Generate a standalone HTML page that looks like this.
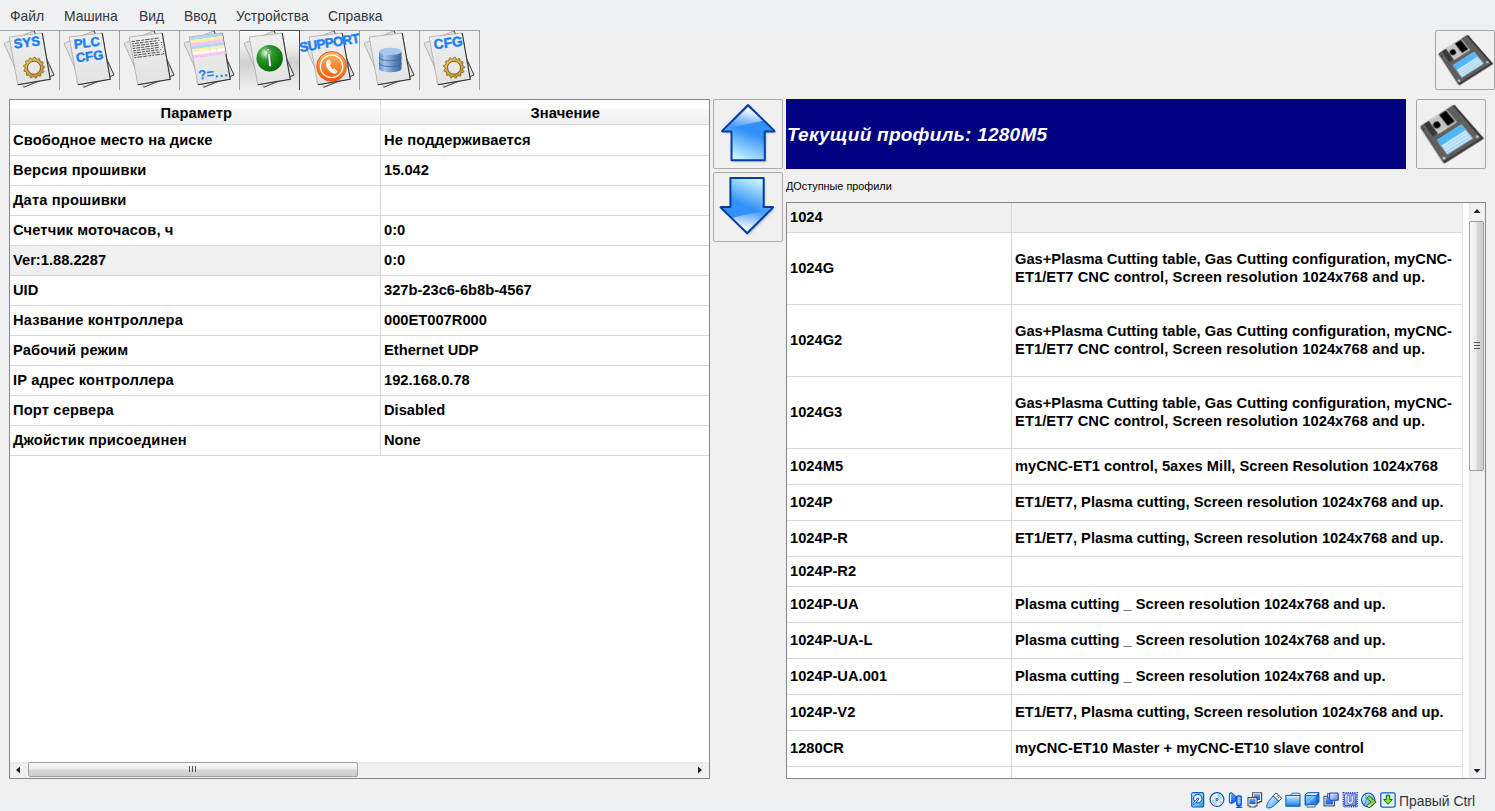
<!DOCTYPE html><html><head><meta charset="utf-8"><style>
*{margin:0;padding:0;box-sizing:border-box}
html,body{width:1495px;height:811px;overflow:hidden;background:#eff0f1;font-family:"Liberation Sans",sans-serif;position:relative}
.abs{position:absolute}
.menu span{position:absolute;top:7.5px;font-size:13.9px;color:#31363b;line-height:16px;white-space:nowrap}
.t{position:absolute;font-weight:bold;font-size:14.7px;color:#000;white-space:nowrap;line-height:17px}
.hl{position:absolute;height:1px;background:#d8d8d8}
.vl{position:absolute;width:1px;background:#d8d8d8}
</style></head><body>
<div class="abs" style="left:0;top:0;width:1495px;height:790px;background:#f0f0f0"></div>
<div class="abs" style="left:0;top:0;width:1495px;height:30px;background:#eff0f1"></div>
<div class="abs" style="left:0;top:790px;width:1495px;height:21px;background:#eff0f1"></div>
<div class="menu">
<span style="left:10px">Файл</span>
<span style="left:64px">Машина</span>
<span style="left:139px">Вид</span>
<span style="left:184px">Ввод</span>
<span style="left:236px">Устройства</span>
<span style="left:328px">Справка</span>
</div>
<div class="abs" style="left:0;top:30px;width:480px;height:1px;background:#a0a0a0"></div>
<div class="abs" style="left:59px;top:31px;width:1px;height:59px;background:#a0a0a0"></div>
<div class="abs" style="left:119px;top:31px;width:1px;height:59px;background:#a0a0a0"></div>
<div class="abs" style="left:179px;top:31px;width:1px;height:59px;background:#a0a0a0"></div>
<div class="abs" style="left:239px;top:31px;width:1px;height:59px;background:#a0a0a0"></div>
<div class="abs" style="left:299px;top:31px;width:1px;height:59px;background:#a0a0a0"></div>
<div class="abs" style="left:359px;top:31px;width:1px;height:59px;background:#a0a0a0"></div>
<div class="abs" style="left:419px;top:31px;width:1px;height:59px;background:#a0a0a0"></div>
<div class="abs" style="left:479px;top:31px;width:1px;height:59px;background:#a0a0a0"></div>
<svg class="abs" style="left:0px;top:30px;overflow:visible" width="60" height="60" viewBox="0 0 60 60"><defs><linearGradient id="pgg" x1="0" y1="0" x2="0" y2="1"><stop offset="0" stop-color="#efefef"/><stop offset="1" stop-color="#e2e2e2"/></linearGradient><radialGradient id="gld" cx="0.4" cy="0.35" r="0.7"><stop offset="0" stop-color="#f5d070"/><stop offset="1" stop-color="#c08a20"/></radialGradient><radialGradient id="grn" cx="0.35" cy="0.3" r="0.75"><stop offset="0" stop-color="#e8ffe8"/><stop offset="0.35" stop-color="#2a9a2a"/><stop offset="1" stop-color="#006800"/></radialGradient><linearGradient id="org" x1="0" y1="0" x2="0" y2="1"><stop offset="0" stop-color="#f4b870"/><stop offset="0.5" stop-color="#f28a30"/><stop offset="1" stop-color="#f85400"/></linearGradient><linearGradient id="dbg" x1="0" y1="0" x2="1" y2="0"><stop offset="0" stop-color="#5a88c0"/><stop offset="0.25" stop-color="#a8c8ec"/><stop offset="0.7" stop-color="#5a86c0"/><stop offset="1" stop-color="#3a64a0"/></linearGradient></defs><polygon points="4,13.3 34,0.8 54,45 23.7,57.3" fill="#e3e3e3" stroke="#9a9a9a" stroke-width="0.7"/><path d="M34,0.8 L54,45 L23.7,57.3" fill="none" stroke="#4a4a4a" stroke-width="1"/><polygon points="9.2,7 42.2,3 50.3,49.2 17.8,54.7" fill="url(#pgg)" stroke="#a0a0a0" stroke-width="0.7"/><path d="M42.2,3 L50.3,49.2 L17.8,54.7" fill="none" stroke="#333" stroke-width="1.1"/><text x="14.2" y="18.5" font-family="Liberation Sans" font-weight="bold" font-size="13.2" fill="#1b7ff0" stroke="#1b7ff0" stroke-width="0.45" transform="rotate(-7 14.2 18.5)" >SYS</text><polygon points="34.00,27.20 35.27,27.28 36.13,29.06 37.16,29.38 38.88,28.40 39.96,29.06 39.90,31.04 40.66,31.80 42.64,31.74 43.30,32.82 42.32,34.54 42.64,35.57 44.42,36.43 44.50,37.70 42.84,38.77 42.64,39.83 43.82,41.42 43.30,42.58 41.32,42.76 40.66,43.60 40.96,45.56 39.96,46.34 38.14,45.58 37.16,46.02 36.51,47.89 35.27,48.12 34.00,46.60 32.93,46.54 31.49,47.89 30.28,47.52 29.86,45.58 28.94,45.02 27.04,45.56 26.14,44.66 26.68,42.76 26.12,41.84 24.18,41.42 23.81,40.21 25.16,38.77 25.10,37.70 23.58,36.43 23.81,35.19 25.68,34.54 26.12,33.56 25.36,31.74 26.14,30.74 28.10,31.04 28.94,30.38 29.12,28.40 30.28,27.88 31.87,29.06 32.93,28.86" fill="url(#gld)" stroke="#7a5410" stroke-width="0.7" stroke-linejoin="round"/><circle cx="34" cy="37.7" r="6.5" fill="#e8e8e8" stroke="#6a4a10" stroke-width="0.9"/></svg>
<svg class="abs" style="left:60px;top:30px;overflow:visible" width="60" height="60" viewBox="0 0 60 60"><polygon points="4,13.3 34,0.8 54,45 23.7,57.3" fill="#e3e3e3" stroke="#9a9a9a" stroke-width="0.7"/><path d="M34,0.8 L54,45 L23.7,57.3" fill="none" stroke="#4a4a4a" stroke-width="1"/><polygon points="9.2,7 42.2,3 50.3,49.2 17.8,54.7" fill="url(#pgg)" stroke="#a0a0a0" stroke-width="0.7"/><path d="M42.2,3 L50.3,49.2 L17.8,54.7" fill="none" stroke="#333" stroke-width="1.1"/><text x="14.5" y="18.8" font-family="Liberation Sans" font-weight="bold" font-size="13" fill="#1b7ff0" stroke="#1b7ff0" stroke-width="0.45" transform="rotate(-7 14.5 18.8)" >PLC</text><text x="16.5" y="32.3" font-family="Liberation Sans" font-weight="bold" font-size="13" fill="#1b7ff0" stroke="#1b7ff0" stroke-width="0.45" transform="rotate(-7 16.5 32.3)" >CFG</text></svg>
<svg class="abs" style="left:120px;top:30px;overflow:visible" width="60" height="60" viewBox="0 0 60 60"><polygon points="4,13.3 34,0.8 54,45 23.7,57.3" fill="#e3e3e3" stroke="#9a9a9a" stroke-width="0.7"/><path d="M34,0.8 L54,45 L23.7,57.3" fill="none" stroke="#4a4a4a" stroke-width="1"/><polygon points="9.2,7 42.2,3 50.3,49.2 17.8,54.7" fill="url(#pgg)" stroke="#a0a0a0" stroke-width="0.7"/><path d="M42.2,3 L50.3,49.2 L17.8,54.7" fill="none" stroke="#333" stroke-width="1.1"/><line x1="11.6" y1="11.6" x2="41.5" y2="7.7" stroke="#303030" stroke-width="0.85" stroke-dasharray="3.5 1 4 1.2 3 1 4.5 1 3 1 4"/><line x1="12.0" y1="13.9" x2="41.9" y2="10.0" stroke="#303030" stroke-width="0.85" stroke-dasharray="2 1 4 1 3.5 1.2 4 1 3 1 3"/><line x1="12.4" y1="16.2" x2="42.3" y2="12.3" stroke="#303030" stroke-width="0.85" stroke-dasharray="3 1.2 3.5 1 4 1 3 1 4 1 3"/><line x1="12.8" y1="18.5" x2="42.7" y2="14.6" stroke="#303030" stroke-width="0.85" stroke-dasharray="2.5 1 4 1 3 1 4.5 1 3 1 4"/><line x1="13.2" y1="20.8" x2="43.1" y2="16.9" stroke="#303030" stroke-width="0.85" stroke-dasharray="3 1 3 1.2 4 1 3.5 1 3 1 4"/><line x1="13.6" y1="23.1" x2="43.5" y2="19.2" stroke="#303030" stroke-width="0.85" stroke-dasharray="2 1 4.5 1 3 1 4 1 3.5 1 3"/><line x1="14.0" y1="25.4" x2="43.9" y2="21.5" stroke="#303030" stroke-width="0.85" stroke-dasharray="3.5 1 3 1 4 1.2 3 1 4 1 3"/><line x1="14.4" y1="27.7" x2="44.3" y2="23.8" stroke="#303030" stroke-width="0.85" stroke-dasharray="2 1 5 1 4 1 3 1"/></svg>
<svg class="abs" style="left:180px;top:30px;overflow:visible" width="60" height="60" viewBox="0 0 60 60"><polygon points="4,13.3 34,0.8 54,45 23.7,57.3" fill="#e3e3e3" stroke="#9a9a9a" stroke-width="0.7"/><path d="M34,0.8 L54,45 L23.7,57.3" fill="none" stroke="#4a4a4a" stroke-width="1"/><polygon points="9.2,7 42.2,3 50.3,49.2 17.8,54.7" fill="url(#pgg)" stroke="#a0a0a0" stroke-width="0.7"/><path d="M42.2,3 L50.3,49.2 L17.8,54.7" fill="none" stroke="#333" stroke-width="1.1"/><polygon points="10.00,7.20 42.40,3.10 42.90,6.10 10.50,10.20" fill="#a9d8f8"/><polygon points="10.52,10.20 42.92,6.10 43.42,9.10 11.02,13.20" fill="#fbf2a8"/><polygon points="11.04,13.20 43.44,9.10 43.94,12.10 11.54,16.20" fill="#fbc4f0"/><polygon points="11.56,16.20 43.96,12.10 44.46,15.10 12.06,19.20" fill="#a9d8f8"/><polygon points="12.08,19.20 44.48,15.10 44.98,18.10 12.58,22.20" fill="#fbf2a8"/><polygon points="12.60,22.20 45.00,18.10 45.50,21.10 13.10,25.20" fill="#ffffff"/><polygon points="13.12,25.20 45.52,21.10 46.02,24.10 13.62,28.20" fill="#fbc4f0"/><line x1="27.5" y1="6" x2="30.5" y2="26" stroke="#d0d0d0" stroke-width="0.5"/><line x1="34.5" y1="5" x2="37.5" y2="25" stroke="#d0d0d0" stroke-width="0.5"/><text x="19" y="49.5" font-family="Liberation Sans" font-weight="bold" font-size="13" fill="#1b7ff0" stroke="#1b7ff0" stroke-width="0.1" transform="rotate(-7 19 49.5)" >?=</text><text x="35" y="47.6" font-family="Liberation Sans" font-weight="bold" font-size="13" fill="#1b7ff0" stroke="#1b7ff0" stroke-width="0.1" transform="rotate(-7 35 47.6)" letter-spacing="1.1">...</text></svg>
<div class="abs" style="left:240px;top:30px;width:60px;height:60px;background:linear-gradient(#f8f8f8 0,#f0f0f0 25%,#d0d0d0 52%,#e2e2e2 78%,#f0f0f0 100%);border-top:1px solid #555;border-right:1px solid #444"></div>
<svg class="abs" style="left:240px;top:30px;overflow:visible" width="60" height="60" viewBox="0 0 60 60"><polygon points="4,13.3 34,0.8 54,45 23.7,57.3" fill="#e3e3e3" stroke="#9a9a9a" stroke-width="0.7"/><path d="M34,0.8 L54,45 L23.7,57.3" fill="none" stroke="#4a4a4a" stroke-width="1"/><polygon points="9.2,7 42.2,3 50.3,49.2 17.8,54.7" fill="url(#pgg)" stroke="#a0a0a0" stroke-width="0.7"/><path d="M42.2,3 L50.3,49.2 L17.8,54.7" fill="none" stroke="#333" stroke-width="1.1"/><circle cx="29.7" cy="28.2" r="13.2" fill="url(#grn)"/><rect x="28.2" y="23.4" width="2.6" height="13.2" fill="#fff" stroke="#0b4a12" stroke-width="0.5" transform="rotate(-6 29.5 30)"/><rect x="26.9" y="18.4" width="2.8" height="2.6" fill="#fff" stroke="#0b4a12" stroke-width="0.5" transform="rotate(-10 28.3 19.7)"/></svg>
<svg class="abs" style="left:300px;top:30px;overflow:visible" width="60" height="60" viewBox="0 0 60 60"><polygon points="4,13.3 34,0.8 54,45 23.7,57.3" fill="#e3e3e3" stroke="#9a9a9a" stroke-width="0.7"/><path d="M34,0.8 L54,45 L23.7,57.3" fill="none" stroke="#4a4a4a" stroke-width="1"/><polygon points="9.2,7 42.2,3 50.3,49.2 17.8,54.7" fill="url(#pgg)" stroke="#a0a0a0" stroke-width="0.7"/><path d="M42.2,3 L50.3,49.2 L17.8,54.7" fill="none" stroke="#333" stroke-width="1.1"/><circle cx="31.6" cy="36.4" r="14.9" fill="url(#org)" stroke="#f04c08" stroke-width="0.9"/><circle cx="31.6" cy="36.4" r="11.2" fill="none" stroke="#fff" stroke-width="1.2"/><path d="M27.2,30.6 L29.6,29.9 L31.2,33.6 L29.6,34.8 Q30.2,37.6 32.8,39.6 L34.3,38.5 L37.3,41.2 L36.4,43.1 Q33.8,44.5 30.2,41.6 Q25.6,37.6 26.2,32.6 Z" fill="#fff" stroke="#f5f5f5" stroke-width="0.4"/><path d="M28.8,31.2 L30,33.6 M33.6,40.2 L36,41.8" stroke="#f08030" stroke-width="0.5"/><text x="0.3" y="22" font-family="Liberation Sans" font-weight="bold" font-size="13.3" fill="#1b7ff0" stroke="#1b7ff0" stroke-width="0.45" transform="rotate(-9 0.3 22)" letter-spacing="-0.6">SUPPORT</text></svg>
<svg class="abs" style="left:360px;top:30px;overflow:visible" width="60" height="60" viewBox="0 0 60 60"><polygon points="4,13.3 34,0.8 54,45 23.7,57.3" fill="#e3e3e3" stroke="#9a9a9a" stroke-width="0.7"/><path d="M34,0.8 L54,45 L23.7,57.3" fill="none" stroke="#4a4a4a" stroke-width="1"/><polygon points="9.2,7 42.2,3 50.3,49.2 17.8,54.7" fill="url(#pgg)" stroke="#a0a0a0" stroke-width="0.7"/><path d="M42.2,3 L50.3,49.2 L17.8,54.7" fill="none" stroke="#333" stroke-width="1.1"/><path d="M19,21.5 L41.5,21.5 L41.5,39 A11.25,3.2 0 0 1 19,39 Z" fill="url(#dbg)"/><ellipse cx="30.25" cy="21.4" rx="11.25" ry="3.6" fill="#a6c6ec"/><path d="M19,27.4 A11.25,3.3 0 0 0 41.5,27.4" fill="none" stroke="#3a5a8a" stroke-width="0.7"/><path d="M19,33.2 A11.25,3.3 0 0 0 41.5,33.2" fill="none" stroke="#3a5a8a" stroke-width="0.7"/></svg>
<svg class="abs" style="left:420px;top:30px;overflow:visible" width="60" height="60" viewBox="0 0 60 60"><polygon points="4,13.3 34,0.8 54,45 23.7,57.3" fill="#e3e3e3" stroke="#9a9a9a" stroke-width="0.7"/><path d="M34,0.8 L54,45 L23.7,57.3" fill="none" stroke="#4a4a4a" stroke-width="1"/><polygon points="9.2,7 42.2,3 50.3,49.2 17.8,54.7" fill="url(#pgg)" stroke="#a0a0a0" stroke-width="0.7"/><path d="M42.2,3 L50.3,49.2 L17.8,54.7" fill="none" stroke="#333" stroke-width="1.1"/><text x="14.3" y="19.2" font-family="Liberation Sans" font-weight="bold" font-size="13.8" fill="#1b7ff0" stroke="#1b7ff0" stroke-width="0.45" transform="rotate(-7 14.3 19.2)" >CFG</text><polygon points="34.00,27.20 35.27,27.28 36.13,29.06 37.16,29.38 38.88,28.40 39.96,29.06 39.90,31.04 40.66,31.80 42.64,31.74 43.30,32.82 42.32,34.54 42.64,35.57 44.42,36.43 44.50,37.70 42.84,38.77 42.64,39.83 43.82,41.42 43.30,42.58 41.32,42.76 40.66,43.60 40.96,45.56 39.96,46.34 38.14,45.58 37.16,46.02 36.51,47.89 35.27,48.12 34.00,46.60 32.93,46.54 31.49,47.89 30.28,47.52 29.86,45.58 28.94,45.02 27.04,45.56 26.14,44.66 26.68,42.76 26.12,41.84 24.18,41.42 23.81,40.21 25.16,38.77 25.10,37.70 23.58,36.43 23.81,35.19 25.68,34.54 26.12,33.56 25.36,31.74 26.14,30.74 28.10,31.04 28.94,30.38 29.12,28.40 30.28,27.88 31.87,29.06 32.93,28.86" fill="url(#gld)" stroke="#7a5410" stroke-width="0.7" stroke-linejoin="round"/><circle cx="34" cy="37.7" r="6.5" fill="#e8e8e8" stroke="#6a4a10" stroke-width="0.9"/></svg>
<div class="abs" style="left:9px;top:99px;width:701px;height:680px;background:#fff;border:1px solid #828790"></div>
<div class="abs" style="left:10px;top:100px;width:699px;height:25px;background:linear-gradient(#fff 0,#fff 8px,#f6f7f8 9px,#eff0f2 24px);border-bottom:1px solid #d5d5d5"></div>
<div class="vl" style="left:380px;top:100px;height:24px;background:#e2e3e6"></div>
<div class="t" style="left:160.5px;top:104.95px;letter-spacing:0.1px">Параметр</div>
<div class="t" style="left:530.5px;top:104.95px;letter-spacing:0.1px">Значение</div>
<div class="hl" style="left:10px;top:155px;width:699px"></div>
<div class="t" style="left:13px;top:131.65px;letter-spacing:0.15px">Свободное место на диске</div>
<div class="t" style="left:384px;top:131.65px;letter-spacing:0.15px">Не поддерживается</div>
<div class="hl" style="left:10px;top:185px;width:699px"></div>
<div class="t" style="left:13px;top:161.65px;letter-spacing:0.15px">Версия прошивки</div>
<div class="t" style="left:384px;top:161.65px;">15.042</div>
<div class="hl" style="left:10px;top:215px;width:699px"></div>
<div class="t" style="left:13px;top:191.65px;letter-spacing:0.15px">Дата прошивки</div>
<div class="hl" style="left:10px;top:245px;width:699px"></div>
<div class="t" style="left:13px;top:221.65px;letter-spacing:0.15px">Счетчик моточасов, ч</div>
<div class="t" style="left:384px;top:221.65px;">0:0</div>
<div class="abs" style="left:10px;top:246px;width:370px;height:29px;background:#f0f0f0"></div>
<div class="hl" style="left:10px;top:275px;width:699px"></div>
<div class="t" style="left:13px;top:251.65px;">Ver:1.88.2287</div>
<div class="t" style="left:384px;top:251.65px;">0:0</div>
<div class="hl" style="left:10px;top:305px;width:699px"></div>
<div class="t" style="left:13px;top:281.65px;">UID</div>
<div class="t" style="left:384px;top:281.65px;">327b-23c6-6b8b-4567</div>
<div class="hl" style="left:10px;top:335px;width:699px"></div>
<div class="t" style="left:13px;top:311.65px;letter-spacing:0.15px">Название контроллера</div>
<div class="t" style="left:384px;top:311.65px;">000ET007R000</div>
<div class="hl" style="left:10px;top:365px;width:699px"></div>
<div class="t" style="left:13px;top:341.65px;letter-spacing:0.15px">Рабочий режим</div>
<div class="t" style="left:384px;top:341.65px;">Ethernet UDP</div>
<div class="hl" style="left:10px;top:395px;width:699px"></div>
<div class="t" style="left:13px;top:371.65px;letter-spacing:0.15px">IP адрес контроллера</div>
<div class="t" style="left:384px;top:371.65px;">192.168.0.78</div>
<div class="hl" style="left:10px;top:425px;width:699px"></div>
<div class="t" style="left:13px;top:401.65px;letter-spacing:0.15px">Порт сервера</div>
<div class="t" style="left:384px;top:401.65px;">Disabled</div>
<div class="hl" style="left:10px;top:455px;width:699px"></div>
<div class="t" style="left:13px;top:431.65px;letter-spacing:0.15px">Джойстик присоединен</div>
<div class="t" style="left:384px;top:431.65px;">None</div>
<div class="vl" style="left:380px;top:125px;height:331px"></div>
<div class="abs" style="left:10px;top:762px;width:699px;height:16px;background:linear-gradient(#e8e8e8,#f0f0f0 3px,#f0f0f0)"></div>
<div class="abs" style="left:28px;top:762px;width:330px;height:15px;border:1px solid #a0a0a0;border-radius:2px;background:linear-gradient(#f8f8f8,#ececec 6px,#d6d6d6 7px,#cccccc 14px)"></div>
<svg class="abs" style="left:14px;top:765px" width="10" height="10"><path d="M2 5 L6 1.5 L6 8.5 Z" fill="#222"/></svg>
<svg class="abs" style="left:694px;top:765px" width="10" height="10"><path d="M8 5 L4 1.5 L4 8.5 Z" fill="#222"/></svg>
<div class="abs" style="left:189px;top:766px;width:7px;height:6px;background:repeating-linear-gradient(90deg,#555 0,#555 1px,transparent 1px,transparent 3px)"></div>
<div class="abs" style="left:713px;top:99px;width:70px;height:70px;background:#f0f0f0;border:1px solid #acacac;border-radius:2px"></div>
<div class="abs" style="left:713px;top:172px;width:70px;height:70px;background:#f0f0f0;border:1px solid #acacac;border-radius:2px"></div>
<svg class="abs" style="left:713px;top:99px" width="70" height="70" viewBox="0 0 70 70"><defs><linearGradient id="arb" x1="0.55" y1="0.5" x2="0.35" y2="1"><stop offset="0" stop-color="#3290f8"/><stop offset="1" stop-color="#c8f6ff"/></linearGradient><linearGradient id="arw" x1="0.6" y1="0.1" x2="0.35" y2="0.9"><stop offset="0" stop-color="#ffffff" stop-opacity="0.95"/><stop offset="1" stop-color="#ffffff" stop-opacity="0"/></linearGradient><filter id="arsh" x="-20%" y="-20%" width="140%" height="140%"><feGaussianBlur stdDeviation="1"/></filter></defs><path d="M35,6 L61.2,31.6 Q62,32.4 61,32.4 L51.8,32.4 L51.8,61.3 L18.5,61.3 L18.5,32.4 L9.6,32.4 Q8.6,32.4 9.4,31.6 Z" fill="#000" opacity="0.18" transform="translate(1.5,1.8)" filter="url(#arsh)"/><path d="M35,6 L61.2,31.6 Q62,32.4 61,32.4 L51.8,32.4 L51.8,61.3 L18.5,61.3 L18.5,32.4 L9.6,32.4 Q8.6,32.4 9.4,31.6 Z" fill="url(#arb)"/><path d="M35,8 L50.8,21.4 L18.5,28.6 L18.5,32.4 L10.5,32.4 Z" fill="url(#arw)"/><path d="M35,6 L61.2,31.6 Q62,32.4 61,32.4 L51.8,32.4 L51.8,61.3 L18.5,61.3 L18.5,32.4 L9.6,32.4 Q8.6,32.4 9.4,31.6 Z" fill="none" stroke="#053d9e" stroke-width="2" stroke-linejoin="round"/></svg>
<svg class="abs" style="left:713px;top:172px" width="70" height="70" viewBox="0 0 70 70"><g transform="rotate(180 34.6 33.7)"><path d="M35,6 L61.2,31.6 Q62,32.4 61,32.4 L51.8,32.4 L51.8,61.3 L18.5,61.3 L18.5,32.4 L9.6,32.4 Q8.6,32.4 9.4,31.6 Z" fill="#000" opacity="0.18" transform="translate(-1.5,-1.8)" filter="url(#arsh)"/><path d="M35,6 L61.2,31.6 Q62,32.4 61,32.4 L51.8,32.4 L51.8,61.3 L18.5,61.3 L18.5,32.4 L9.6,32.4 Q8.6,32.4 9.4,31.6 Z" fill="url(#arb)"/><path d="M35,8 L50.8,21.4 L18.5,28.6 L18.5,32.4 L10.5,32.4 Z" fill="url(#arw)"/><path d="M35,6 L61.2,31.6 Q62,32.4 61,32.4 L51.8,32.4 L51.8,61.3 L18.5,61.3 L18.5,32.4 L9.6,32.4 Q8.6,32.4 9.4,31.6 Z" fill="none" stroke="#053d9e" stroke-width="2" stroke-linejoin="round"/></g></svg>
<div class="abs" style="left:1435px;top:30px;width:60px;height:60px;border:1px solid #a8a8a8;border-radius:2px;background:#f0f0f0"></div>
<div class="abs" style="left:1435px;top:30px;width:40px;height:40px;transform-origin:0 0;transform:matrix3d(0.717113,-0.462928,0,-0.000126,0.431823,0.599299,0,-0.003240,0,0,1,0,3.328402,23.668639,0,1.000000)"><svg width="40" height="40" viewBox="0 0 40 40" style="position:absolute;left:0;top:0;overflow:visible"><path d="M1.2,0 L40,0 L40,40 L0,40 L0,1.2 Z" fill="#5f5f5f" stroke="#3a3a3a" stroke-width="0.5"/><path d="M40,0.4 L40,40 L0.4,40" fill="none" stroke="#2c2c2c" stroke-width="1.6"/><rect x="5" y="0" width="6.4" height="15.2" fill="#383838"/><rect x="11" y="0" width="20.2" height="16" fill="#c4c4c4" stroke="#e8e8e8" stroke-width="0.5"/><rect x="22.6" y="0.5" width="8" height="14" fill="#000"/><circle cx="14.8" cy="7.9" r="3.4" fill="#000"/><rect x="6.7" y="20.5" width="26.8" height="15.3" fill="#f2f8fc"/><rect x="6.7" y="20.5" width="26.8" height="6.3" fill="#4cb8f8"/><path d="M6.7,28.4 H33.5 M6.7,30.1 H33.5 M6.7,31.8 H33.5 M6.7,33.5 H33.5 M6.7,35.1 H33.5" stroke="#5ab6ee" stroke-width="0.6"/><circle cx="1.8" cy="4.5" r="0.8" fill="#2a2a2a"/><circle cx="37.5" cy="36.6" r="1.1" fill="#e0e8f0"/><circle cx="2.6" cy="36.9" r="1.1" fill="#e0e8f0"/></svg></div>
<div class="abs" style="left:1416px;top:99px;width:70px;height:70px;border:1px solid #a8a8a8;border-radius:2px;background:#f0f0f0"></div>
<div class="abs" style="left:1416px;top:99px;width:40px;height:40px;transform-origin:0 0;transform:matrix3d(0.836632,-0.540083,0,-0.000126,0.503794,0.699182,0,-0.003240,0,0,1,0,3.883136,27.613412,0,1.000000)"><svg width="40" height="40" viewBox="0 0 40 40" style="position:absolute;left:0;top:0;overflow:visible"><path d="M1.2,0 L40,0 L40,40 L0,40 L0,1.2 Z" fill="#5f5f5f" stroke="#3a3a3a" stroke-width="0.5"/><path d="M40,0.4 L40,40 L0.4,40" fill="none" stroke="#2c2c2c" stroke-width="1.6"/><rect x="5" y="0" width="6.4" height="15.2" fill="#383838"/><rect x="11" y="0" width="20.2" height="16" fill="#c4c4c4" stroke="#e8e8e8" stroke-width="0.5"/><rect x="22.6" y="0.5" width="8" height="14" fill="#000"/><circle cx="14.8" cy="7.9" r="3.4" fill="#000"/><rect x="6.7" y="20.5" width="26.8" height="15.3" fill="#f2f8fc"/><rect x="6.7" y="20.5" width="26.8" height="6.3" fill="#4cb8f8"/><path d="M6.7,28.4 H33.5 M6.7,30.1 H33.5 M6.7,31.8 H33.5 M6.7,33.5 H33.5 M6.7,35.1 H33.5" stroke="#5ab6ee" stroke-width="0.6"/><circle cx="1.8" cy="4.5" r="0.8" fill="#2a2a2a"/><circle cx="37.5" cy="36.6" r="1.1" fill="#e0e8f0"/><circle cx="2.6" cy="36.9" r="1.1" fill="#e0e8f0"/></svg></div>
<div class="abs" style="left:786px;top:99px;width:620px;height:70px;background:#000080"></div>
<div class="abs" style="left:787px;top:123.5px;font:italic bold 19px 'Liberation Sans';color:#fff;white-space:nowrap;letter-spacing:0.24px;line-height:22px">Текущий профиль: 1280M5</div>
<div class="abs" style="left:786px;top:180px;font-size:10.85px;color:#000;white-space:nowrap;line-height:13px">ДОступные профили</div>
<div class="abs" style="left:786px;top:202px;width:700px;height:577px;background:#fff;border:1px solid #828790"></div>
<div class="abs" style="left:787px;top:203px;width:676px;height:29px;background:#f0f0f0"></div>
<div class="hl" style="left:787px;top:232px;width:676px"></div>
<div class="hl" style="left:787px;top:304px;width:676px"></div>
<div class="hl" style="left:787px;top:376px;width:676px"></div>
<div class="hl" style="left:787px;top:448px;width:676px"></div>
<div class="hl" style="left:787px;top:484px;width:676px"></div>
<div class="hl" style="left:787px;top:520px;width:676px"></div>
<div class="hl" style="left:787px;top:556px;width:676px"></div>
<div class="hl" style="left:787px;top:586px;width:676px"></div>
<div class="hl" style="left:787px;top:622px;width:676px"></div>
<div class="hl" style="left:787px;top:658px;width:676px"></div>
<div class="hl" style="left:787px;top:694px;width:676px"></div>
<div class="hl" style="left:787px;top:730px;width:676px"></div>
<div class="hl" style="left:787px;top:766px;width:676px"></div>
<div class="vl" style="left:1011px;top:203px;height:575px"></div>
<div class="vl" style="left:1462px;top:203px;height:575px;background:#e4e4e4"></div>
<div class="t" style="left:790px;top:208.65px;">1024</div>
<div class="t" style="left:790px;top:259.65px;">1024G</div>
<div class="t" style="left:1015px;top:250.65px;">Gas+Plasma Cutting table, Gas Cutting configuration, myCNC-</div>
<div class="t" style="left:1015px;top:268.65px;letter-spacing:0.08px">ET1/ET7 CNC control, Screen resolution 1024x768 and up.</div>
<div class="t" style="left:790px;top:331.65px;">1024G2</div>
<div class="t" style="left:1015px;top:322.65px;">Gas+Plasma Cutting table, Gas Cutting configuration, myCNC-</div>
<div class="t" style="left:1015px;top:340.65px;letter-spacing:0.08px">ET1/ET7 CNC control, Screen resolution 1024x768 and up.</div>
<div class="t" style="left:790px;top:403.65px;">1024G3</div>
<div class="t" style="left:1015px;top:394.65px;">Gas+Plasma Cutting table, Gas Cutting configuration, myCNC-</div>
<div class="t" style="left:1015px;top:412.65px;letter-spacing:0.08px">ET1/ET7 CNC control, Screen resolution 1024x768 and up.</div>
<div class="t" style="left:790px;top:457.65px;">1024M5</div>
<div class="t" style="left:1015px;top:457.65px;">myCNC-ET1 control, 5axes Mill, Screen Resolution 1024x768</div>
<div class="t" style="left:790px;top:493.65px;">1024P</div>
<div class="t" style="left:1015px;top:493.65px;">ET1/ET7, Plasma cutting, Screen resolution 1024x768 and up.</div>
<div class="t" style="left:790px;top:529.65px;">1024P-R</div>
<div class="t" style="left:1015px;top:529.65px;">ET1/ET7, Plasma cutting, Screen resolution 1024x768 and up.</div>
<div class="t" style="left:790px;top:562.65px;">1024P-R2</div>
<div class="t" style="left:790px;top:595.65px;">1024P-UA</div>
<div class="t" style="left:1015px;top:595.65px;">Plasma cutting _ Screen resolution 1024x768 and up.</div>
<div class="t" style="left:790px;top:631.65px;">1024P-UA-L</div>
<div class="t" style="left:1015px;top:631.65px;">Plasma cutting _ Screen resolution 1024x768 and up.</div>
<div class="t" style="left:790px;top:667.65px;">1024P-UA.001</div>
<div class="t" style="left:1015px;top:667.65px;">Plasma cutting _ Screen resolution 1024x768 and up.</div>
<div class="t" style="left:790px;top:703.65px;">1024P-V2</div>
<div class="t" style="left:1015px;top:703.65px;">ET1/ET7, Plasma cutting, Screen resolution 1024x768 and up.</div>
<div class="t" style="left:790px;top:739.65px;">1280CR</div>
<div class="t" style="left:1015px;top:739.65px;">myCNC-ET10 Master + myCNC-ET10 slave control</div>
<div class="abs" style="left:1469px;top:203px;width:16px;height:575px;background:linear-gradient(90deg,#e8e8e8,#f0f0f0 3px,#f0f0f0)"></div>
<div class="abs" style="left:1469px;top:221px;width:15px;height:250px;border:1px solid #a0a0a0;border-radius:2px;background:linear-gradient(90deg,#f8f8f8,#ececec 6px,#d6d6d6 7px,#cccccc 14px)"></div>
<svg class="abs" style="left:1472px;top:207px" width="10" height="10"><path d="M5 2 L1.5 6 L8.5 6 Z" fill="#222"/></svg>
<svg class="abs" style="left:1472px;top:765px" width="10" height="10"><path d="M5 8 L1.5 4 L8.5 4 Z" fill="#222"/></svg>
<div class="abs" style="left:1474px;top:342px;width:6px;height:7px;background:repeating-linear-gradient(180deg,#555 0,#555 1px,transparent 1px,transparent 3px)"></div>
<svg class="abs" style="left:1190px;top:792px;overflow:visible" width="16" height="16" viewBox="0 0 16 16"><defs><linearGradient id="sb1" x1="0" y1="0" x2="1" y2="1"><stop offset="0" stop-color="#e8f8ff"/><stop offset="0.45" stop-color="#9ad6fa"/><stop offset="1" stop-color="#2c88e6"/></linearGradient><linearGradient id="sb2" x1="0" y1="0" x2="0" y2="1"><stop offset="0" stop-color="#ffffff"/><stop offset="0.25" stop-color="#9adcf8"/><stop offset="1" stop-color="#1c7ae0"/></linearGradient><linearGradient id="sb3" x1="0" y1="0" x2="0" y2="1"><stop offset="0" stop-color="#66a8f8"/><stop offset="1" stop-color="#0a54e0"/></linearGradient><linearGradient id="sb4" x1="0" y1="0" x2="1" y2="1"><stop offset="0" stop-color="#ffffff"/><stop offset="0.4" stop-color="#b0c4f8"/><stop offset="1" stop-color="#6080f0"/></linearGradient><linearGradient id="sb5" x1="0" y1="0" x2="0.6" y2="1"><stop offset="0" stop-color="#9ad8ff"/><stop offset="1" stop-color="#2a80e8"/></linearGradient><linearGradient id="sg1" x1="0" y1="1" x2="1" y2="0"><stop offset="0" stop-color="#f0ffb0"/><stop offset="1" stop-color="#48b010"/></linearGradient></defs><rect x="1.7" y="0.7" width="12" height="14.3" rx="1.6" fill="url(#sb1)" stroke="#0c5cc8" stroke-width="1.2"/><circle cx="7.7" cy="6.6" r="4.2" fill="#f4fbff" stroke="#0c5cc8" stroke-width="1.1"/><circle cx="7.9" cy="6.6" r="1.2" fill="#0c5cc8"/><path d="M8,7 L3.8,11.8" stroke="#0c5cc8" stroke-width="2.4" stroke-linecap="round"/><path d="M8,7 L3.8,11.8" stroke="#fff" stroke-width="1" stroke-linecap="round"/></svg>
<svg class="abs" style="left:1209px;top:792px;overflow:visible" width="16" height="16" viewBox="0 0 16 16"><circle cx="8" cy="7.5" r="6.9" fill="#f6fbff" stroke="#0c50b8" stroke-width="1.2"/><path d="M8,2.5 A5,5 0 0 1 13,7.5 L10,7.5 A2,2 0 0 0 8,5.5 Z" fill="#a8d8ff"/><path d="M8,12.5 A5,5 0 0 1 3,7.5 L6,7.5 A2,2 0 0 0 8,9.5 Z" fill="#a8d8ff"/><circle cx="10.6" cy="3.4" r="1.3" fill="#90e890"/><circle cx="4" cy="9.5" r="1.3" fill="#90e890"/><circle cx="12" cy="10" r="1.3" fill="#f0b0f0"/><circle cx="6" cy="12.5" r="1.3" fill="#f0b0f0"/><circle cx="8" cy="7.5" r="1.5" fill="#0c50b8"/><circle cx="8" cy="7.5" r="0.5" fill="#fff"/></svg>
<svg class="abs" style="left:1228px;top:792px;overflow:visible" width="16" height="16" viewBox="0 0 16 16"><path d="M1.4,1.5 L3.5,0.6 L7.8,4.2 L7.6,9.2 L3.8,11.6 L1.4,10.6 Z" fill="url(#sb3)" stroke="#0a4cc0" stroke-width="0.9" stroke-linejoin="round"/><path d="M2.6,2.2 L2.6,10" stroke="#dff4ff" stroke-width="1"/><rect x="8.5" y="3.8" width="5" height="10.2" rx="1.2" fill="#1a6ae0" stroke="#0a4cc0" stroke-width="0.8"/><path d="M9.3,6.2 H12.8 M9.3,8.2 H12.8 M9.3,10.2 H12.8 M11,4.5 V12.5" stroke="#dff0ff" stroke-width="0.8"/><path d="M8.2,15.3 H14.2 M11,13.5 V15.3" stroke="#0a4cc0" stroke-width="1.2"/></svg>
<svg class="abs" style="left:1247px;top:792px;overflow:visible" width="16" height="16" viewBox="0 0 16 16"><path d="M5.6,0.8 H14.6 V9.6 H12.6 V10.6 H7.6 V9.6 H5.6 Z" fill="#fff" stroke="#4a4a4a" stroke-width="1.1"/><rect x="7" y="2.2" width="6.2" height="5.8" fill="url(#sb3)"/><path d="M1,5.6 H10 V14 H8 V15 H3 V14 H1 Z" fill="#fff" stroke="#4a4a4a" stroke-width="1.1"/><rect x="2.4" y="7" width="6.2" height="5.2" fill="url(#sb3)"/></svg>
<svg class="abs" style="left:1266px;top:792px;overflow:visible" width="16" height="16" viewBox="0 0 16 16"><path d="M10.2,0.9 L15.6,6.3 L12.6,9.3 L7.2,3.9 Z" fill="#fff" stroke="#333" stroke-width="1"/><rect x="10.7" y="3.6" width="1" height="1" fill="#333"/><rect x="12.3" y="5.2" width="1" height="1" fill="#333"/><path d="M7.2,3.9 L12.6,9.3 L7,14.5 Q4,16.5 1.5,16 L0.8,15.3 Q0.5,12.5 2.5,9.5 Z" fill="url(#sb1)" stroke="#0c5cc8" stroke-width="1"/></svg>
<svg class="abs" style="left:1285px;top:792px;overflow:visible" width="16" height="16" viewBox="0 0 16 16"><path d="M6,2.8 L7,1.2 H14.2 L15,2.2 V3.5 H6 Z" fill="#fff" stroke="#0c5cc8" stroke-width="0.9"/><rect x="0.9" y="3.4" width="14.1" height="10.8" fill="url(#sb2)" stroke="#0c5cc8" stroke-width="1.1"/></svg>
<svg class="abs" style="left:1304px;top:792px;overflow:visible" width="16" height="16" viewBox="0 0 16 16"><path d="M1,3 L3.5,0.6 H15 V10 L12.5,13 H1 Z" fill="#1a70d8" stroke="#0c5cc8" stroke-width="0.9"/><path d="M1.8,2.8 L3.8,1.2 H14 L12,3 Z" fill="#fff"/><rect x="2" y="4" width="9.6" height="8" fill="url(#sb5)"/><path d="M3,11 L10,4.5" stroke="#c8ecff" stroke-width="0.7"/><path d="M3,13.5 V15 H11 V13.5" fill="#fff" stroke="#444" stroke-width="0.9"/></svg>
<svg class="abs" style="left:1323px;top:792px;overflow:visible" width="16" height="16" viewBox="0 0 16 16"><rect x="1" y="4.3" width="10.5" height="9.6" fill="#fff" stroke="#4a4a4a" stroke-width="1.1"/><rect x="2.4" y="5.7" width="7.8" height="6.8" fill="url(#sb3)"/><rect x="6.6" y="1" width="8.6" height="7.2" rx="0.8" fill="url(#sb4)" stroke="#2a40c0" stroke-width="1.1"/><rect x="4.5" y="1.6" width="1.6" height="4.2" fill="#fff" stroke="#2a40c0" stroke-width="0.8"/></svg>
<svg class="abs" style="left:1342px;top:792px;overflow:visible" width="16" height="16" viewBox="0 0 16 16"><rect x="1.3" y="0.8" width="13.9" height="13.9" fill="none" stroke="#2a40c0" stroke-width="1.5" stroke-dasharray="1.1 1.1"/><rect x="2.4" y="1.9" width="11.7" height="11.7" rx="0.8" fill="url(#sb4)" stroke="#2a40c0" stroke-width="0.9"/><path d="M5.2,3.6 V9.3 Q5.2,12.3 8.25,12.3 Q11.3,12.3 11.3,9.3 V3.6 H9.2 V9.2 Q9.2,10.2 8.25,10.2 Q7.3,10.2 7.3,9.2 V3.6 Z" fill="#fff" stroke="#3a50c8" stroke-width="0.7"/></svg>
<svg class="abs" style="left:1361px;top:792px;overflow:visible" width="16" height="16" viewBox="0 0 16 16"><ellipse cx="7.2" cy="8" rx="6.6" ry="7" fill="url(#sb1)" stroke="#0c50b8" stroke-width="1.1"/><path d="M4,2 Q7,7 3,13" stroke="#0c50b8" stroke-width="0.6" fill="none"/><path d="M8,3.8 L15.2,10 L8,16 L5.6,13.6 L10.2,10 L5.6,6.2 Z" fill="url(#sg1)" stroke="#206010" stroke-width="1" stroke-linejoin="round"/></svg>
<svg class="abs" style="left:1380px;top:792px;overflow:visible" width="16" height="16" viewBox="0 0 16 16"><rect x="0.8" y="0.8" width="14.3" height="14.3" rx="1.8" fill="#f4faff" stroke="#0c5cc8" stroke-width="1.3"/><rect x="2.6" y="2.6" width="10.7" height="10.7" fill="#cfe4fa" opacity="0.6"/><path d="M6.3,3.2 H9.7 V7.5 H12.4 L8,12.2 L3.6,7.5 H6.3 Z" fill="#80f020" stroke="#105010" stroke-width="0.9" stroke-linejoin="round"/></svg>
<div class="abs" style="left:1399px;top:793px;font-size:13.9px;color:#31363b;white-space:nowrap;line-height:16px">Правый Ctrl</div>
</body></html>
